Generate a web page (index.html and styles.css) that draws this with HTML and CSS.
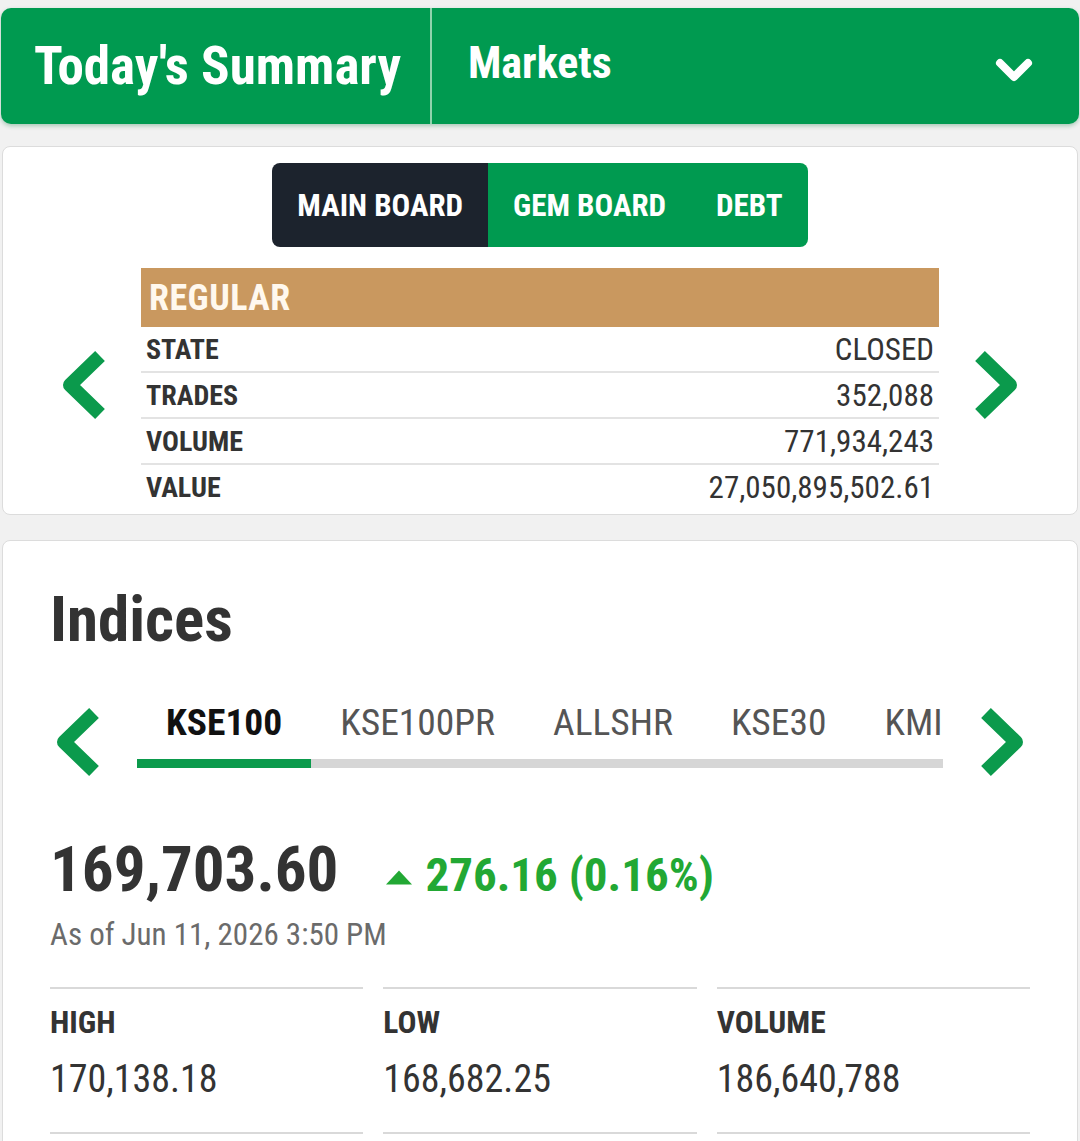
FILE: index.html
```html
<!DOCTYPE html>
<html lang="en">

<head>
    <meta charset="UTF-8">
    <meta name="viewport" content="width=device-width, initial-scale=1.0">
    <title>Today's Summary</title>
    <link rel="stylesheet" href="styles.css">
</head>

<body>
    <header class="topbar">
        <h1 class="topbar-title">Today's Summary</h1>
        <div class="topbar-menu">
            <span>Markets</span>
            <svg class="menu-chevron" viewBox="0 0 40 26">
                <polyline points="6,6 20,20 34,6" />
            </svg>
        </div>
    </header>

    <section class="card board-card">
        <div class="board-tabs">
            <button class="board-tab active">MAIN BOARD</button>
            <button class="board-tab">GEM BOARD</button>
            <button class="board-tab">DEBT</button>
        </div>

        <div class="board-slider">
            <button class="slide-arrow">
                <svg viewBox="0 0 46 70">
                    <polyline points="38,6 8,35 38,64" />
                </svg>
            </button>

            <div class="market-table">
                <div class="market-head">REGULAR</div>
                <div class="market-row"><span>STATE</span><span class="market-value">CLOSED</span></div>
                <div class="market-row"><span>TRADES</span><span class="market-value">352,088</span></div>
                <div class="market-row"><span>VOLUME</span><span class="market-value">771,934,243</span></div>
                <div class="market-row"><span>VALUE</span><span class="market-value">27,050,895,502.61</span></div>
            </div>

            <button class="slide-arrow">
                <svg viewBox="0 0 46 70">
                    <polyline points="8,6 38,35 8,64" />
                </svg>
            </button>
        </div>
    </section>

    <section class="card indices-card">
        <h2 class="indices-title">Indices</h2>

        <div class="index-nav">
            <button class="slide-arrow">
                <svg viewBox="0 0 46 70">
                    <polyline points="38,6 8,35 38,64" />
                </svg>
            </button>

            <div class="index-tabs">
                <div class="index-tab-list">
                    <span class="index-tab active">KSE100</span>
                    <span class="index-tab">KSE100PR</span>
                    <span class="index-tab">ALLSHR</span>
                    <span class="index-tab">KSE30</span>
                    <span class="index-tab">KMI</span>
                </div>
                <div class="index-track">
                    <div class="index-track-fill"></div>
                </div>
            </div>

            <button class="slide-arrow">
                <svg viewBox="0 0 46 70">
                    <polyline points="8,6 38,35 8,64" />
                </svg>
            </button>
        </div>

        <div class="index-quote">
            <span class="index-value">169,703.60</span>
            <span class="index-change"><svg class="change-arrow" viewBox="0 0 26 14"><polygon points="13,0 26,14 0,14" /></svg>276.16 (0.16%)</span>
        </div>
        <div class="index-time">As of Jun 11, 2026 3:50 PM</div>

        <div class="index-stats">
            <div class="stat">
                <div class="stat-label">HIGH</div>
                <div class="stat-value">170,138.18</div>
            </div>
            <div class="stat">
                <div class="stat-label">LOW</div>
                <div class="stat-value">168,682.25</div>
            </div>
            <div class="stat">
                <div class="stat-label">VOLUME</div>
                <div class="stat-value">186,640,788</div>
            </div>
        </div>
    </section>
</body>

</html>
```

FILE: styles.css
```css
* {
    margin: 0;
    padding: 0;
    box-sizing: border-box;
    font-family: 'Roboto Condensed', Roboto, sans-serif;
    font-stretch: 75%;
}

body {
    background-color: #f1f1f1;
    color: #333333;
    padding: 8px 1px 0;
    overflow: hidden;
}

button {
    border: none;
    background: none;
    cursor: pointer;
}

/* top bar */

.topbar {
    display: flex;
    height: 116px;
    background-color: #009a50;
    border-radius: 10px;
    box-shadow: 0 2px 4px rgba(0, 110, 50, 0.3);
    color: #ffffff;
}

.topbar-title {
    width: 431px;
    padding-left: 33px;
    display: flex;
    align-items: center;
    font-size: 53px;
    font-weight: 700;
    border-right: 2px solid #8fd4ad;
}

.topbar-menu {
    flex: 1;
    display: flex;
    align-items: center;
    justify-content: space-between;
    padding: 0 45px 0 36px;
    font-size: 44px;
    font-weight: 700;
}

.topbar-menu span {
    margin-top: -6px;
}

.menu-chevron {
    width: 40px;
    height: 26px;
    margin-top: 8px;
    fill: none;
    stroke: #ffffff;
    stroke-width: 8;
    stroke-linecap: round;
    stroke-linejoin: round;
}

/* cards */

.card {
    background-color: #ffffff;
    border: 1px solid #dcdcdc;
    border-radius: 8px;
    margin: 0 1px;
}

.slide-arrow {
    width: 46px;
    height: 70px;
    flex-shrink: 0;
}

.slide-arrow svg {
    width: 46px;
    height: 70px;
    display: block;
    fill: none;
    stroke: #0b9a4c;
    stroke-width: 14;
    stroke-linejoin: round;
}

/* board card */

.board-card {
    margin-top: 22px;
    padding: 16px 0 5px;
}

.board-tabs {
    display: flex;
    justify-content: center;
}

.board-tab {
    height: 84px;
    padding: 0 25px;
    background-color: #009a50;
    color: #ffffff;
    font-size: 31px;
    font-weight: 700;
}

.board-tab:first-child {
    border-radius: 8px 0 0 8px;
}

.board-tab:last-child {
    border-radius: 0 8px 8px 0;
}

.board-tab.active {
    background-color: #1c232d;
}

.board-slider {
    display: flex;
    align-items: center;
    justify-content: center;
    gap: 33px;
    margin-top: 21px;
}

.board-slider .slide-arrow {
    margin-bottom: 8px;
}

.market-table {
    width: 798px;
}

.market-head {
    height: 59px;
    padding-left: 8px;
    display: flex;
    align-items: center;
    background-color: #c9985f;
    color: #fff8ee;
    font-size: 36px;
    font-weight: 700;
    letter-spacing: 0.5px;
}

.market-row {
    height: 46px;
    padding: 0 5px;
    display: flex;
    align-items: center;
    justify-content: space-between;
    border-bottom: 2px solid #e3e3e3;
    font-size: 28px;
    font-weight: 700;
}

.market-row:last-child {
    height: 44px;
    border-bottom: none;
}

.market-value {
    font-size: 31px;
    font-weight: 400;
}

/* indices card */

.indices-card {
    margin-top: 25px;
    padding: 47px 47px 0;
    height: 700px;
}

.indices-title {
    font-size: 63px;
    line-height: 1;
    font-weight: 700;
}

.index-nav {
    display: flex;
    align-items: flex-start;
    justify-content: center;
    gap: 35px;
    margin-top: 56px;
}

.index-tabs {
    width: 806px;
    margin-top: -8px;
    overflow: hidden;
}

.index-tab-list {
    display: flex;
    white-space: nowrap;
}

.index-tab {
    padding: 0 29px;
    font-size: 37.5px;
    line-height: 1.25;
    color: #555555;
}

.index-tab.active {
    color: #111111;
    font-weight: 700;
}

.index-track {
    height: 9px;
    margin-top: 13px;
    background-color: #d6d6d6;
}

.index-track-fill {
    width: 174px;
    height: 100%;
    background-color: #0b9a4c;
}

.index-quote {
    display: flex;
    align-items: baseline;
    gap: 48px;
    margin-top: 61px;
}

.index-value {
    font-size: 63px;
    line-height: 1;
    font-weight: 700;
}

.index-change {
    font-size: 47px;
    line-height: 1;
    font-weight: 700;
    color: #22a834;
}

.change-arrow {
    width: 26px;
    height: 15px;
    margin-right: 13px;
    vertical-align: 6px;
    fill: #22a834;
}

.index-time {
    margin-top: 18px;
    font-size: 31px;
    line-height: 1;
    color: #6b6b6b;
}

.index-stats {
    display: grid;
    grid-template-columns: repeat(3, 1fr);
    gap: 20px;
    margin-top: 37px;
}

.stat {
    border-top: 2px solid #d9d9d9;
    border-bottom: 2px solid #d9d9d9;
    padding: 18px 0 34px;
}

.stat-label {
    font-size: 31.5px;
    line-height: 1;
    font-weight: 700;
}

.stat-value {
    margin-top: 21px;
    font-size: 38px;
    line-height: 1;
}
```
